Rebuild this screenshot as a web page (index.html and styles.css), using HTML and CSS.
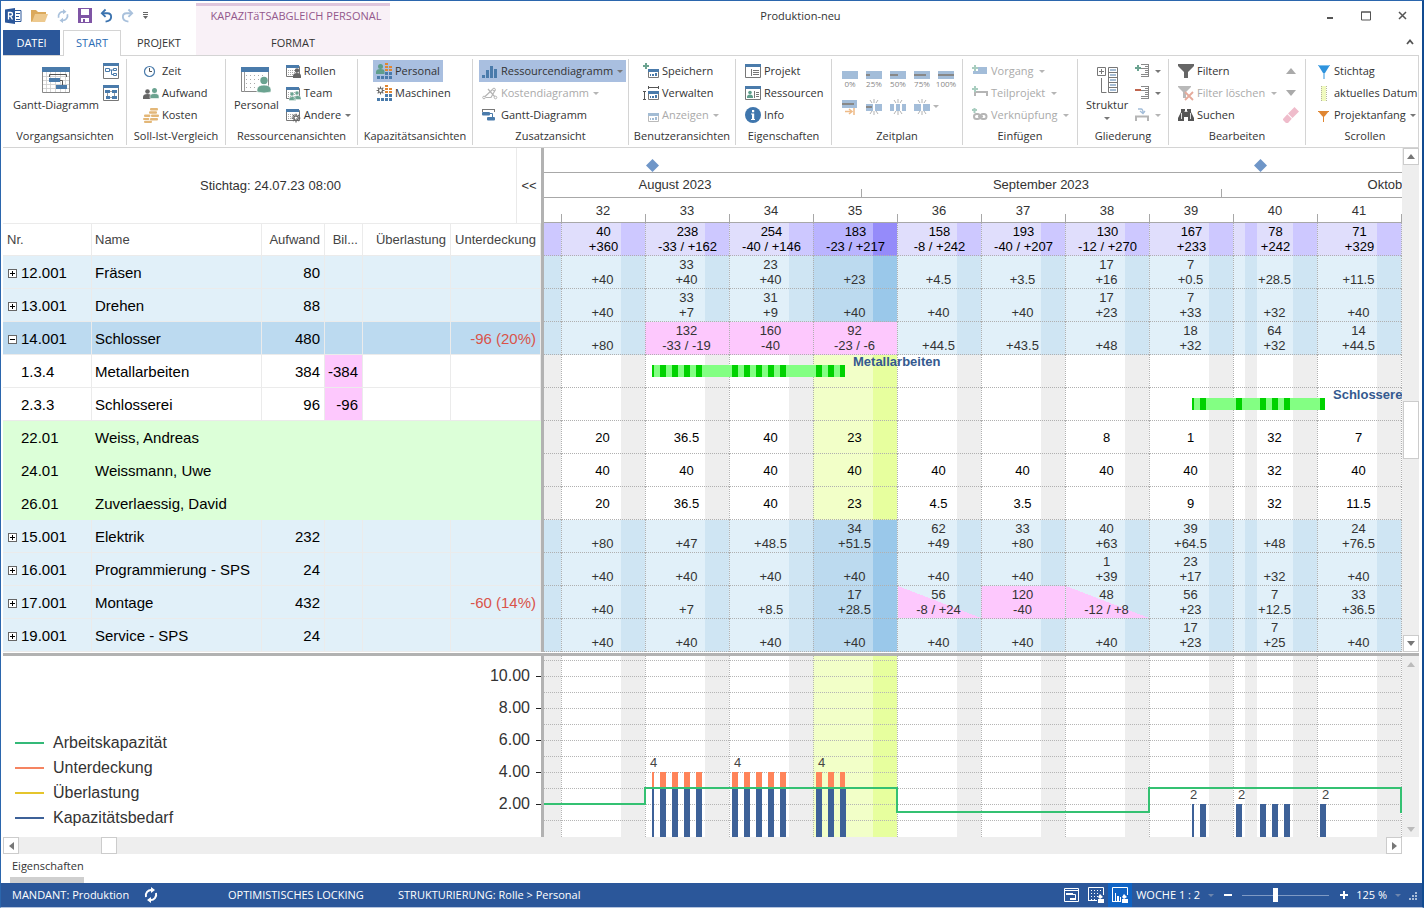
FILE: index.html
```html
<!DOCTYPE html>
<html lang="de">
<head>
<meta charset="utf-8">
<title>Produktion-neu</title>
<meta name="viewport" content="width=device-width, initial-scale=1">
<link rel="stylesheet" href="styles.css">
</head>
<body>
<svg class="defs" aria-hidden="true">
  <defs>
    <symbol id="i-tree" viewBox="0 0 16 16"><path fill="#fff" stroke="#777" d="M.5 2.500h15v13H.5z"/><path fill="#4a7bab" d="M0 0h16v3H0z"/><path fill="none" stroke="#4a7bab" d="M2.500 5.500h4v3h-4zM10.500 5.500h3v2h-3zM10.500 10.500h3v2h-3zM6.500 7h4M8.500 7v4.500h2"/></symbol>
    <symbol id="i-net" viewBox="0 0 16 16"><path fill="#fff" stroke="#777" d="M.5 2.500h15v13H.5z"/><path stroke="#999" fill="none" d="M4.500 8v3M11.500 8v3M7 6.500h2M7 12.500h2"/><path fill="#4a7bab" d="M0 0h16v3H0zM2 5h5v3H2zM9 5h5v3H9zM3 11h4v3H3zM9 11h5v3H9z"/></symbol>
    <symbol id="i-clock" viewBox="0 0 16 16"><circle cx="6.500" cy="8.500" r="5" fill="#fff" stroke="#4a7bab" stroke-width="1.200"/><path d="M6.500 5V8.500H9" fill="none" stroke="#555"/></symbol>
    <symbol id="i-people" viewBox="0 0 16 16"><circle cx="4.500" cy="6.500" r="2.300" fill="#666"/><path fill="#666" d="M0 14V12q0-3 4.500-3T8 12v2z"/><circle cx="11.500" cy="5.500" r="2.500" fill="#6ba390"/><path fill="#6ba390" stroke="#fff" stroke-width=".6" d="M7 13.500v-2q0-3 4.500-3t4.500 3v2z"/></symbol>
    <symbol id="i-coins" viewBox="0 0 16 16"><g fill="#e3b778"><rect x="7" y="1" width="8" height="2.500" rx="1"/><rect x="6" y="4.300" width="8" height="2.500" rx="1"/><rect x="8" y="7.600" width="8" height="2.500" rx="1"/><rect x="7" y="11" width="8" height="2.500" rx="1"/><rect x="1" y="7.600" width="6.400" height="2.500" rx="1"/><rect x="0" y="11" width="6.400" height="2" rx="1"/><rect x="1" y="13.700" width="8" height="2.300" rx="1"/></g></symbol>
    <symbol id="i-cal-base" viewBox="0 0 16 16"><path fill="#fff" stroke="#777" d="M1.500 3.500h13v10h-13z"/><path fill="#4a7bab" d="M1 2h13v3H1z"/><path stroke="#aaa" stroke-dasharray="1 1" d="M3 7.500h9M3 9.500h9M3 11.500h9"/></symbol>
    <symbol id="i-roles" viewBox="0 0 16 16"><use href="#i-cal-base"/><circle cx="12" cy="7.500" r="2.200" fill="#666"/><path fill="#666" d="M8 15v-2q0-3 4-3t4 3v2z"/></symbol>
    <symbol id="i-team" viewBox="0 0 16 16"><use href="#i-cal-base"/><g fill="#6ba390" stroke="#fff" stroke-width=".4"><circle cx="7" cy="9" r="2"/><circle cx="12" cy="8" r="2"/><path d="M9 14.500v-1q0-3 3.500-3t3.500 3v1zM4 15.500v-1q0-3 3.500-3t3.500 3v1z"/></g></symbol>
    <symbol id="i-gear" viewBox="0 0 16 16"><circle cx="8" cy="8" r="3.500" fill="none" stroke="#666" stroke-width="2"/><path stroke="#666" stroke-width="2" d="M8 1v3M8 12v3M1 8h3M12 8h3M3 3l2 2M11 11l2 2M13 3l-2 2M5 11l-2 2"/></symbol>
    <symbol id="i-other" viewBox="0 0 16 16"><use href="#i-cal-base"/><use href="#i-gear" x="6" y="6" width="10" height="10"/></symbol>
    <symbol id="i-load" viewBox="0 0 16 16"><path fill="#e08632" d="M9 0h3v2H9zM9 3h3v2H9zM9 6h3v2H9zM13 3h3v2h-3zM13 6h3v2h-3z"/><path fill="#4a7bab" d="M1 13h3v3H1zM5 13h3v3H5zM9 9h3v3H9zM9 13h3v3H9zM13 9h3v3h-3zM13 13h3v3h-3z"/></symbol>
    <symbol id="i-pers" viewBox="0 0 16 16"><use href="#i-load"/><circle cx="4.500" cy="3.500" r="2.500" fill="#5f9e8b"/><path fill="#5f9e8b" d="M0 11V9q0-3 4.500-3T8.500 9v2z"/></symbol>
    <symbol id="i-mach" viewBox="0 0 16 16"><use href="#i-load"/><use href="#i-gear" x="0" y="1" width="9" height="9"/></symbol>
    <symbol id="i-bars" viewBox="0 0 16 16"><path fill="#4a7bab" d="M0 12h3v3H0zM4 7h3v8H4zM8 3h3v12H8zM12 6h3v9h-3z"/></symbol>
    <symbol id="i-curve" viewBox="0 0 16 16"><path fill="none" stroke="#b5b5b5" stroke-width="1.200" d="M2 12.500l9-8.500M4 12.500h5l4.500-8M6 4l7 8"/><g fill="#fff" stroke="#b5b5b5"><circle cx="2" cy="12.500" r="1.300"/><circle cx="12" cy="4.500" r="1.300"/><circle cx="13.500" cy="12.500" r="1.300"/></g></symbol>
    <symbol id="i-gantt" viewBox="0 0 16 16"><path fill="none" stroke="#777" d="M0 2.500h13M.5 2v3M12.500 2v3"/><rect x="0" y="5" width="8" height="3.500" rx="1" fill="#4a7bab"/><rect x="5" y="10" width="8" height="3.500" rx="1" fill="#4a7bab"/><path fill="none" stroke="#4a7bab" d="M8 6.500h2.500V10"/></symbol>
    <symbol id="i-view" viewBox="0 0 16 16"><path fill="#fff" stroke="#777" d="M5.500 6.500h10v8h-10z"/><path fill="#4a7bab" d="M5 6h11v3H5zM12 10h2v3h-2zM9 11h2v2H9zM7 11h1v2H7z"/></symbol>
    <symbol id="i-save-view" viewBox="0 0 16 16"><use href="#i-view"/><path stroke="#6ba390" stroke-width="2" d="M0 3h6M3 0v6"/></symbol>
    <symbol id="i-edit-view" viewBox="0 0 16 16"><use href="#i-view"/><path fill="none" stroke="#555" d="M5 2.500h11M5.500 1v3M15.500 1v3M1.500 6v9M0 6.500h3M0 14.500h3"/></symbol>
    <symbol id="i-proj" viewBox="0 0 16 16"><path fill="#fff" stroke="#777" d="M.5 2.500h15v12H.5z"/><path fill="#4a7bab" d="M0 1h16v3H0z"/><path stroke="#777" d="M6.500 6v7M8 7.500h6M8 9.500h6M8 11.500h6"/></symbol>
    <symbol id="i-ress" viewBox="0 0 16 16"><path fill="#fff" stroke="#777" d="M.5 2.500h15v12H.5z"/><path fill="#4a7bab" d="M0 1h16v3H0z"/><path stroke="#777" d="M9.500 6v7M11 7.500h3M11 9.500h3M11 11.500h3"/><circle cx="5" cy="7.500" r="1.800" fill="#5f9e8b"/><path fill="#5f9e8b" d="M2 13v-1q0-2.500 3-2.500t3 2.500v1z"/></symbol>
    <symbol id="i-info" viewBox="0 0 16 16"><circle cx="8" cy="8" r="8" fill="#3f76ad"/><path fill="#fff" d="M7 3h2.200v2.200H7zM6 6.500h3.200V12H10v1H6v-1h1V7.500H6z"/></symbol>
    <symbol id="i-burst" viewBox="0 0 16 16"><path stroke="#aaa" stroke-width=".9" d="M4 1l2 3M8 0v4M12 1l-2 3M4 15l2-3M8 16v-4M12 15l-2-3"/></symbol>
    <symbol id="i-task" viewBox="0 0 16 16"><path fill="#a3bdd9" d="M6 4h9v7H6zM1 8h5v3H1z"/><path stroke="#a8cdbf" stroke-width="2" d="M0 5h6M3 2v6"/></symbol>
    <symbol id="i-sub" viewBox="0 0 16 16"><path fill="none" stroke="#b5b5b5" stroke-width="2" d="M3 11V7h12v4"/><path stroke="#a8cdbf" stroke-width="2" d="M0 4h6M3 1v6"/></symbol>
    <symbol id="i-link" viewBox="0 0 16 16"><g fill="none" stroke="#b5b5b5" stroke-width="2"><rect x="2" y="7" width="6" height="5" rx="2.500"/><rect x="8.500" y="7" width="6" height="5" rx="2.500"/><path d="M6 9.500h5"/></g><path stroke="#a8cdbf" stroke-width="2" d="M0 3h5M2.500 1v5"/></symbol>
    <symbol id="i-ind" viewBox="0 0 16 16"><path stroke="#888" fill="none" d="M6 1.500h8M10 3.500h4M6 5.500h8M10 7.500h4M10 9.500h4M6 11.500h8M6 13.500h8M13.500 2v11"/></symbol>
    <symbol id="i-plus" viewBox="0 0 16 16"><use href="#i-ind"/><path stroke="#6ba390" stroke-width="2" d="M0 5h6M3 2v6"/></symbol>
    <symbol id="i-minus" viewBox="0 0 16 16"><use href="#i-ind"/><path stroke="#c0654e" stroke-width="2" d="M0 5h6"/></symbol>
    <symbol id="i-roll" viewBox="0 0 16 16"><path fill="none" stroke="#b5b5b5" stroke-width="2" d="M1 14V9.500h12V14"/><path fill="none" stroke="#a3bdd9" stroke-width="1.300" d="M3 2h3q2 0 2 4M5 4l3 2.500L10 4"/></symbol>
    <symbol id="i-filter" viewBox="0 0 16 16"><path fill="#666" d="M0 1h16v2l-6 6v6H6V9L0 3z"/></symbol>
    <symbol id="i-nofilter" viewBox="0 0 16 16"><path fill="#b9b9b9" d="M0 1h13v1L8 7v6H5V7L0 2z"/><path stroke="#e5aa9b" stroke-width="1.800" d="M7 7l8 8M15 7l-8 8"/></symbol>
    <symbol id="i-search" viewBox="0 0 16 16"><path fill="#555" d="M3 2h4v2h2V2h4v3l3 6v3h-6v-4H6v4H0v-3l3-6z"/><path stroke="#fff" d="M3.500 6v6M12.500 6v6M6.500 4.500h3" fill="none" stroke-width=".8"/></symbol>
    <symbol id="i-eraser" viewBox="0 0 16 16"><path fill="#efbccb" d="M11.500 0L16 4.500 9.500 11 5 6.500zM4.300 7.200l4.500 4.500L5 16H3l-3-3v-1z"/></symbol>
    <symbol id="i-key" viewBox="0 0 16 16"><path fill="#2f93dd" d="M3 2h12l-5 8H8z"/><path stroke="#2f93dd" d="M9 8v8"/><path stroke="#7ec0ee" d="M4 2.500h10"/></symbol>
    <symbol id="i-today" viewBox="0 0 16 16"><path fill="#f0fabf" d="M6 1h5v15H6z"/><path stroke="#b5b5a0" stroke-dasharray="1 1" d="M6.500 1v15M11.500 1v15"/></symbol>
    <symbol id="i-start" viewBox="0 0 16 16"><path fill="#e08632" d="M3 4h11L9.500 9.500h-2z"/><path stroke="#e08632" d="M3 4.500h11M8.500 8v7"/></symbol>
    <symbol id="i-sync" viewBox="0 0 16 16"><g fill="none" stroke="currentColor" stroke-width="2"><path d="M3 10a5.500 5.500 0 0 1 6-7M13 6a5.500 5.500 0 0 1-6 7"/></g><path fill="currentColor" d="M8 0l4 3-4 3zM8 10v6l-4-3z"/></symbol>
    <symbol id="i-undo" viewBox="0 0 14 16"><path fill="none" stroke="currentColor" stroke-width="2" d="M3 5h5q4 0 4 4t-6 5"/><path fill="none" stroke="currentColor" stroke-width="2" d="M6 1L2 5l4 4"/></symbol>
  </defs>
</svg>

<header class="title-bar">
  <div class="quick-access">
    <svg class="q-logo" width="17" height="16" viewBox="0 0 17 16" aria-label="R"><path fill="#fff" stroke="#2b579a" d="M8 2.500h8v11H8z"/><path stroke="#2b579a" d="M11 5.500h4M11 8.500h3M11 11.500h4"/><path fill="#2b579a" d="M0 1.500L10 0v16L0 14.500z"/><path fill="none" stroke="#fff" stroke-width="1.300" d="M3.500 11.500v-7h2q2 0 2 1.800t-2 1.800h-2m2 0l2 3.400"/></svg>
    <button aria-label="Öffnen"><svg width="17" height="16" viewBox="0 0 17 16"><path fill="#dba95c" d="M0 14V2h5l2 2h8v2z"/><path fill="#edc98e" d="M1 14L4 6h13l-3 8z"/></svg></button>
    <button aria-label="Aktualisieren" class="pale"><svg width="14" height="16"><use href="#i-sync"/></svg></button>
    <button aria-label="Speichern"><svg width="14" height="15" viewBox="0 0 14 15"><path fill="#7f55a5" d="M0 0h14v15H0z"/><path fill="#fff" d="M3 1h8v6H3zM3 10h8v4H3z"/><path fill="#7f55a5" d="M5 11h2v3H5z"/></svg></button>
    <button aria-label="Rückgängig" class="blue"><svg width="13" height="16"><use href="#i-undo"/></svg></button>
    <button aria-label="Wiederholen" class="pale"><svg class="flip" width="13" height="16"><use href="#i-undo"/></svg></button>
    <button aria-label="Anpassen"><svg width="7" height="8" viewBox="0 0 7 8"><path fill="#666" d="M1 0h5v1H1zM1 2h5v1H1zM1 4h5L3.500 7z"/></svg></button>
  </div>
  <nav class="tabs">
    <button class="tab file">DATEI</button>
    <button class="tab active">START</button>
    <button class="tab">PROJEKT</button>
  </nav>
  <div class="context">
    <div class="context-title">KAPAZITäTSABGLEICH PERSONAL</div>
    <button class="tab">FORMAT</button>
  </div>
  <h1>Produktion-neu</h1>
  <div class="window-controls">
    <button aria-label="Minimieren"><svg width="10" height="10"><path d="M2 6h6v2H2z" fill="#555"/></svg></button>
    <button aria-label="Maximieren"><svg width="10" height="10"><path d="M.5 1h9v8h-9zM0 1h10" fill="none" stroke="#555"/></svg></button>
    <button aria-label="Schließen"><svg width="10" height="10"><path d="M2 1l7 7M9 1L2 8" stroke="#555" stroke-width="1.500"/></svg></button>
  </div>
  <button class="collapse" aria-label="Menüband reduzieren"><svg width="8" height="6"><path d="M1 5l3-3.500L7 5" fill="none" stroke="#555" stroke-width="1.800"/></svg></button>
</header>

<section class="ribbon">
  <div class="group g1">
    <div class="tools">
      <button class="large"><svg width="28" height="26" viewBox="0 0 28 26"><path fill="#fff" stroke="#888" d="M.5 2.500h27v23H.5z"/><path stroke="#ccc" stroke-width=".8" d="M1 9.500h26M1 13.500h26M1 17.500h26M1 21.500h26M4.500 5v20M8.500 5v20M13.500 5v20M18.500 5v20M23.500 5v20"/><path fill="#4a7bab" d="M0 0h28v5H0zM7 11h11v4H7zM14 18h11v4H14z"/><path fill="none" stroke="#555" d="M7.500 10V7.500h17V10M18 13.500h2.500V18"/></svg><span>Gantt-Diagramm</span></button>
      <button class="btn" aria-label="Strukturplan"><svg><use href="#i-tree"/></svg></button>
      <button class="btn" aria-label="Netzplan"><svg><use href="#i-net"/></svg></button>
    </div>
    <h2>Vorgangsansichten</h2>
  </div>
  <div class="group g2">
    <div class="tools">
      <button class="btn"><svg><use href="#i-clock"/></svg>Zeit</button>
      <button class="btn"><svg><use href="#i-people"/></svg>Aufwand</button>
      <button class="btn"><svg><use href="#i-coins"/></svg>Kosten</button>
    </div>
    <h2>Soll-Ist-Vergleich</h2>
  </div>
  <div class="group g3">
    <div class="tools">
      <button class="large"><svg width="30" height="26" viewBox="0 0 30 26"><path fill="#fff" stroke="#888" d="M.5 2.500h27v22H.5z"/><path stroke="#aaa" stroke-dasharray="1 3" d="M5 8.500h18M5 12.500h13M5 16.500h12M5 20.500h12"/><path stroke="#999" d="M3.500 5v20"/><path fill="#4a7bab" d="M0 0h28v5H0z"/><circle cx="23" cy="13.500" r="3.700" fill="#6ba390"/><path fill="#6ba390" stroke="#fff" stroke-width=".7" d="M16 25v-3q1-4 7-4t7 4v3q-7 2-14 0z"/></svg><span>Personal</span></button>
      <button class="btn"><svg><use href="#i-roles"/></svg>Rollen</button>
      <button class="btn"><svg><use href="#i-team"/></svg>Team</button>
      <button class="btn"><svg><use href="#i-other"/></svg>Andere<i class="caret"></i></button>
    </div>
    <h2>Ressourcenansichten</h2>
  </div>
  <div class="group g4">
    <div class="tools">
      <button class="btn on"><svg><use href="#i-pers"/></svg>Personal</button>
      <button class="btn"><svg><use href="#i-mach"/></svg>Maschinen</button>
    </div>
    <h2>Kapazitätsansichten</h2>
  </div>
  <div class="group g5">
    <div class="tools">
      <button class="btn on"><svg><use href="#i-bars"/></svg>Ressourcendiagramm<i class="caret"></i></button>
      <button class="btn" disabled><svg><use href="#i-curve"/></svg>Kostendiagramm<i class="caret"></i></button>
      <button class="btn"><svg><use href="#i-gantt"/></svg>Gantt-Diagramm</button>
    </div>
    <h2>Zusatzansicht</h2>
  </div>
  <div class="group g6">
    <div class="tools">
      <button class="btn"><svg><use href="#i-save-view"/></svg>Speichern</button>
      <button class="btn"><svg><use href="#i-edit-view"/></svg>Verwalten</button>
      <button class="btn" disabled><svg class="faded"><use href="#i-view"/></svg>Anzeigen<i class="caret"></i></button>
    </div>
    <h2>Benutzeransichten</h2>
  </div>
  <div class="group g7">
    <div class="tools">
      <button class="btn"><svg><use href="#i-proj"/></svg>Projekt</button>
      <button class="btn"><svg><use href="#i-ress"/></svg>Ressourcen</button>
      <button class="btn"><svg><use href="#i-info"/></svg>Info</button>
    </div>
    <h2>Eigenschaften</h2>
  </div>
  <div class="group g8">
    <div class="progress-tools">
      <button disabled><svg width="16" height="8"><path fill="#a3bdd9" d="M0 0h16v8H0z"/></svg>0%</button>
      <button disabled><svg width="16" height="8"><path fill="#a3bdd9" d="M0 0h16v8H0z"/><path fill="#888" d="M0 3h4v2H0z"/></svg>25%</button>
      <button disabled><svg width="16" height="8"><path fill="#a3bdd9" d="M0 0h16v8H0z"/><path fill="#888" d="M0 3h8v2H0z"/></svg>50%</button>
      <button disabled><svg width="16" height="8"><path fill="#a3bdd9" d="M0 0h16v8H0z"/><path fill="#888" d="M0 3h12v2H0z"/></svg>75%</button>
      <button disabled><svg width="16" height="8"><path fill="#a3bdd9" d="M0 0h16v8H0z"/><path fill="#888" d="M0 3h16v2H0z"/></svg>100%</button>
      <button disabled aria-label="Fortschreiben"><svg width="16" height="16"><path fill="#a3bdd9" d="M0 1h15v8H0z"/><path fill="#888" d="M0 4h12v2H0z"/><path fill="none" stroke="#eebb88" stroke-width="1.500" d="M3 12.500h6M7 10l3 2.500L7 15M12 9v7"/></svg></button>
      <button disabled aria-label="Teilen"><svg width="16" height="16"><use href="#i-burst"/><path fill="#a3bdd9" d="M0 5h7v7H0zM9 5h7v7H9z"/><path fill="#888" d="M0 7h6v2H0z"/></svg></button>
      <button disabled aria-label="Mehrfach teilen"><svg width="16" height="16"><use href="#i-burst"/><path fill="#a3bdd9" d="M0 5h4v7H0zM6 5h4v7H6zM12 5h4v7h-4z"/></svg></button>
      <button disabled aria-label="Zusammenführen" class="wide"><svg width="16" height="16"><use href="#i-burst"/><path fill="#a3bdd9" d="M0 5h7v7H0zM9 5h7v7H9z"/></svg><i class="caret"></i></button>
    </div>
    <h2>Zeitplan</h2>
  </div>
  <div class="group g9">
    <div class="tools">
      <button class="btn" disabled><svg><use href="#i-task"/></svg>Vorgang<i class="caret"></i></button>
      <button class="btn" disabled><svg><use href="#i-sub"/></svg>Teilprojekt<i class="caret"></i></button>
      <button class="btn" disabled><svg><use href="#i-link"/></svg>Verknüpfung<i class="caret"></i></button>
    </div>
    <h2>Einfügen</h2>
  </div>
  <div class="group g10">
    <div class="tools">
      <button class="large"><svg width="21" height="26" viewBox="0 0 21 26"><path fill="#fff" stroke="#777" d="M.5.5h8v8h-8zM11.500.5h9v25h-9z"/><path fill="none" stroke="#777" d="M2 4.500h5M4.500 2v5M4.500 11v14.500h5M11 5.500h10M11 10.500h10M11 15.500h10M11 20.500h10"/><path stroke="#4a7bab" d="M13 3h6M13 8h6M13 13h6M13 18h6M13 23h6"/></svg><span>Struktur</span><i class="caret"></i></button>
      <button class="btn" aria-label="Einblenden"><svg><use href="#i-plus"/></svg><i class="caret"></i></button>
      <button class="btn" aria-label="Ausblenden"><svg><use href="#i-minus"/></svg><i class="caret"></i></button>
      <button class="btn" disabled aria-label="Verdichten"><svg><use href="#i-roll"/></svg><i class="caret"></i></button>
    </div>
    <h2>Gliederung</h2>
  </div>
  <div class="group g11">
    <div class="tools">
      <button class="btn"><svg><use href="#i-filter"/></svg>Filtern</button>
      <button class="btn" disabled><svg><use href="#i-nofilter"/></svg>Filter löschen<i class="caret"></i></button>
      <button class="btn"><svg><use href="#i-search"/></svg>Suchen</button>
      <button class="btn" disabled aria-label="Vorheriges"><svg viewBox="0 0 16 16"><path fill="#aaa" d="M3 11l5-6 5 6z"/></svg></button>
      <button class="btn" disabled aria-label="Nächstes"><svg viewBox="0 0 16 16"><path fill="#aaa" d="M3 5l5 6 5-6z"/></svg></button>
      <button class="btn" disabled aria-label="Löschen"><svg><use href="#i-eraser"/></svg></button>
    </div>
    <h2>Bearbeiten</h2>
  </div>
  <div class="group g12">
    <div class="tools">
      <button class="btn"><svg><use href="#i-key"/></svg>Stichtag</button>
      <button class="btn"><svg><use href="#i-today"/></svg>aktuelles Datum</button>
      <button class="btn"><svg><use href="#i-start"/></svg>Projektanfang<i class="caret"></i></button>
    </div>
    <h2>Scrollen</h2>
  </div>
</section>

<main>
  <section class="board">
    <div class="list-pane">
      <div class="list-top"><div class="key-date">Stichtag: 24.07.23 08:00</div><button class="fold">&lt;&lt;</button></div>
      <table class="list">
        <colgroup><col class="c-nr"><col class="c-name"><col class="c-eff"><col class="c-bal"><col class="c-over"><col></colgroup>
        <thead><tr><th>Nr.</th><th>Name</th><th class="r">Aufwand</th><th class="r">Bil...</th><th class="r">Überlastung</th><th class="r">Unterdeckung</th></tr></thead>
        <tbody>
          <tr class="role"><td><button class="exp" aria-label="Aufklappen"></button>12.001</td><td>Fräsen</td><td>80</td><td></td><td></td><td></td></tr>
          <tr class="role"><td><button class="exp" aria-label="Aufklappen"></button>13.001</td><td>Drehen</td><td>88</td><td></td><td></td><td></td></tr>
          <tr class="role sel"><td><button class="exp open" aria-label="Zuklappen"></button>14.001</td><td>Schlosser</td><td>480</td><td></td><td></td><td class="neg">-96 (20%)</td></tr>
          <tr><td>1.3.4</td><td>Metallarbeiten</td><td>384</td><td class="pink">-384</td><td></td><td></td></tr>
          <tr><td>2.3.3</td><td>Schlosserei</td><td>96</td><td class="pink">-96</td><td></td><td></td></tr>
          <tr class="person"><td>22.01</td><td>Weiss, Andreas</td><td></td><td></td><td></td><td></td></tr>
          <tr class="person"><td>24.01</td><td>Weissmann, Uwe</td><td></td><td></td><td></td><td></td></tr>
          <tr class="person"><td>26.01</td><td>Zuverlaessig, David</td><td></td><td></td><td></td><td></td></tr>
          <tr class="role"><td><button class="exp" aria-label="Aufklappen"></button>15.001</td><td>Elektrik</td><td>232</td><td></td><td></td><td></td></tr>
          <tr class="role"><td><button class="exp" aria-label="Aufklappen"></button>16.001</td><td>Programmierung - SPS</td><td>24</td><td></td><td></td><td></td></tr>
          <tr class="role"><td><button class="exp" aria-label="Aufklappen"></button>17.001</td><td>Montage</td><td>432</td><td></td><td></td><td class="neg">-60 (14%)</td></tr>
          <tr class="role"><td><button class="exp" aria-label="Aufklappen"></button>19.001</td><td>Service - SPS</td><td>24</td><td></td><td></td><td></td></tr>
        </tbody>
      </table>
    </div>
    <div class="time-pane">
      <div class="milestones">
        <svg class="m1" width="13" height="13"><path fill="#6f96c8" d="M6.500 0L13 6.500 6.500 13 0 6.500z"/></svg>
        <svg class="m2" width="13" height="13"><path fill="#6f96c8" d="M6.500 0L13 6.500 6.500 13 0 6.500z"/></svg>
      </div>
      <div class="months"><span class="m31">August 2023</span><span class="m30">September 2023</span><span class="m31">Oktober 2023</span></div>
      <table class="weeks">
        <colgroup><col class="w-stub"><col span="10" class="w-week"><col></colgroup>
        <thead><tr><th></th><th>32</th><th>33</th><th>34</th><th>35</th><th>36</th><th>37</th><th>38</th><th>39</th><th>40</th><th>41</th><th></th></tr></thead>
        <tbody>
          <tr class="sum"><td></td><td>40<br>+360</td><td>238<br>-33 / +162</td><td>254<br>-40 / +146</td><td>183<br>-23 / +217</td><td>158<br>-8 / +242</td><td>193<br>-40 / +207</td><td>130<br>-12 / +270</td><td>167<br>+233</td><td>78<br>+242</td><td>71<br>+329</td><td></td></tr>
          <tr class="role"><td></td><td>+40</td><td>33<br>+40</td><td>23<br>+40</td><td>+23</td><td>+4.5</td><td>+3.5</td><td>17<br>+16</td><td>7<br>+0.5</td><td>+28.5</td><td>+11.5</td><td></td></tr>
          <tr class="role"><td></td><td>+40</td><td>33<br>+7</td><td>31<br>+9</td><td>+40</td><td>+40</td><td>+40</td><td>17<br>+23</td><td>7<br>+33</td><td>+32</td><td>+40</td><td></td></tr>
          <tr class="role"><td></td><td>+80</td><td class="over">132<br>-33 / -19</td><td class="over">160<br>-40</td><td class="over">92<br>-23 / -6</td><td>+44.5</td><td>+43.5</td><td>+48</td><td>18<br>+32</td><td>64<br>+32</td><td>14<br>+44.5</td><td></td></tr>
          <tr><td></td><td></td><td><div class="bar"><svg width="193" height="12"><path fill="#83ff83" d="M0 0h193v12H0z"/><path fill="#00d200" d="M0 0h2v12H0zM8 0h6v12H8zM20 0h6v12h-6zM32 0h6v12h-6zM44 0h6v12h-6zM80 0h6v12h-6zM92 0h6v12h-6zM104 0h6v12h-6zM116 0h6v12h-6zM128 0h6v12h-6zM164 0h6v12h-6zM176 0h6v12h-6zM188 0h5v12h-5z"/></svg><span>Metallarbeiten</span></div></td><td></td><td></td><td></td><td></td><td></td><td></td><td></td><td></td><td></td></tr>
          <tr><td></td><td></td><td></td><td></td><td></td><td></td><td></td><td></td><td><div class="bar late"><svg width="133" height="12"><path fill="#83ff83" d="M0 0h133v12H0z"/><path fill="#00d200" d="M0 0h2v12H0zM8 0h6v12H8zM44 0h6v12h-6zM68 0h6v12h-6zM80 0h6v12h-6zM92 0h6v12h-6zM128 0h5v12h-5z"/></svg><span>Schlosserei</span></div></td><td></td><td></td><td></td></tr>
          <tr class="person"><td></td><td>20</td><td>36.5</td><td>40</td><td>23</td><td></td><td></td><td>8</td><td>1</td><td>32</td><td>7</td><td></td></tr>
          <tr class="person"><td></td><td>40</td><td>40</td><td>40</td><td>40</td><td>40</td><td>40</td><td>40</td><td>40</td><td>32</td><td>40</td><td></td></tr>
          <tr class="person"><td></td><td>20</td><td>36.5</td><td>40</td><td>23</td><td>4.5</td><td>3.5</td><td></td><td>9</td><td>32</td><td>11.5</td><td></td></tr>
          <tr class="role"><td></td><td>+80</td><td>+47</td><td>+48.5</td><td>34<br>+51.5</td><td>62<br>+49</td><td>33<br>+80</td><td>40<br>+63</td><td>39<br>+64.5</td><td>+48</td><td>24<br>+76.5</td><td></td></tr>
          <tr class="role"><td></td><td>+40</td><td>+40</td><td>+40</td><td>+40</td><td>+40</td><td>+40</td><td>1<br>+39</td><td>23<br>+17</td><td>+32</td><td>+40</td><td></td></tr>
          <tr class="role"><td></td><td>+40</td><td>+7</td><td>+8.5</td><td>17<br>+28.5</td><td class="part">56<br>-8 / +24</td><td class="over">120<br>-40</td><td class="part">48<br>-12 / +8</td><td>56<br>+23</td><td>7<br>+12.5</td><td>33<br>+36.5</td><td></td></tr>
          <tr class="role"><td></td><td>+40</td><td>+40</td><td>+40</td><td>+40</td><td>+40</td><td>+40</td><td>+40</td><td>17<br>+23</td><td>7<br>+25</td><td>+40</td><td></td></tr>
        </tbody>
      </table>
    </div>
    <div class="vscroll"><button class="arrow" aria-label="Nach oben"><i class="tri up"></i></button><div class="thumb"></div><button class="arrow" aria-label="Nach unten"><i class="tri down"></i></button></div>
  </section>

  <section class="board lower">
    <div class="list-pane legend-pane">
      <ul class="legend">
        <li class="cap">Arbeitskapazität</li>
        <li class="under">Unterdeckung</li>
        <li class="load">Überlastung</li>
        <li class="need">Kapazitätsbedarf</li>
      </ul>
      <ol class="axis"><li>10.00</li><li>8.00</li><li>6.00</li><li>4.00</li><li>2.00</li></ol>
    </div>
    <div class="time-pane">
      <svg class="chart" width="100%" height="181">
        <defs>
          <pattern id="wk" x="17" y="0" width="84" height="181" patternUnits="userSpaceOnUse"><path fill="#fff" d="M0 0h84v181H0z"/><path fill="#eee" d="M60 0h24v181H60z"/></pattern>
        </defs>
        <rect width="100%" height="181" fill="url(#wk)"/>
        <path fill="#eee" d="M701 0h12v181h-12z"/>
        <path fill="#f2ffc8" d="M269 0h60v181h-60z"/><path fill="#e7ff9e" d="M329 0h24v181h-24z"/>
        <g stroke="#b5b5b5" stroke-dasharray="1 1">
          <path d="M0 4.500h2000M0 20.500h2000M0 36.500h2000M0 52.500h2000M0 68.500h2000M0 84.500h2000M0 100.500h2000M0 116.500h2000M0 132.500h2000M0 148.500h2000M0 164.500h2000"/>
          <path d="M17.500 0v181M101.500 0v181M185.500 0v181M269.500 0v181M353.500 0v181M437.500 0v181M521.500 0v181M605.500 0v181M689.500 0v181M773.500 0v181M857.500 0v181"/>
        </g>
        <path fill="#ff845a" d="M108 116h2v16h-2zM116 116h6v16h-6zM128 116h6v16h-6zM140 116h6v16h-6zM152 116h6v16h-6zM188 116h6v16h-6zM200 116h6v16h-6zM212 116h6v16h-6zM224 116h6v16h-6zM236 116h6v16h-6zM272 116h6v16h-6zM284 116h6v16h-6zM296 116h5v16h-5z"/>
        <path fill="#3d6198" d="M108 132h2v49h-2zM116 132h6v49h-6zM128 132h6v49h-6zM140 132h6v49h-6zM152 132h6v49h-6zM188 132h6v49h-6zM200 132h6v49h-6zM212 132h6v49h-6zM224 132h6v49h-6zM236 132h6v49h-6zM272 132h6v49h-6zM284 132h6v49h-6zM296 132h6v49h-6zM648 148h2v33h-2zM656 148h6v33h-6zM692 148h6v33h-6zM716 148h6v33h-6zM728 148h6v33h-6zM740 148h6v33h-6zM776 148h6v33h-6z"/>
        <path fill="none" stroke="#34c172" stroke-width="2" d="M0 148H101V132H353V156H605V132H857V156H2000"/>
        <g fill="#444"><text x="106" y="111">4</text><text x="190" y="111">4</text><text x="274" y="111">4</text><text x="646" y="143">2</text><text x="694" y="143">2</text><text x="778" y="143">2</text></g>
      </svg>
    </div>
    <div class="vscroll idle"><i class="tri up"></i><i class="tri down"></i></div>
  </section>
  <div class="hscroll"><button class="arrow" aria-label="Nach links"><i class="tri left"></i></button><div class="thumb"></div><button class="arrow" aria-label="Nach rechts"><i class="tri right"></i></button></div>
  <div class="dock"><button>Eigenschaften</button></div>
</main>

<footer>
  <span class="client">MANDANT: Produktion</span>
  <button class="reload" aria-label="Neu laden"><svg width="16" height="16"><use href="#i-sync"/></svg></button>
  <span class="lock">OPTIMISTISCHES LOCKING</span>
  <span class="struct">STRUKTURIERUNG: Rolle &gt; Personal</span>
  <div class="views">
    <button aria-label="Gantt"><svg width="16" height="16"><path fill="none" stroke="#fff" d="M.5 1.500h14v13H.5zM0 3.500h15"/><path stroke="#fff" stroke-width="2" d="M2 7h7M6 12h6"/><path fill="none" stroke="#fff" d="M9 7.500h2.500V11"/></svg></button>
    <button aria-label="Auslastung"><svg width="16" height="16"><path fill="none" stroke="#fff" d="M.5 14V.5h15V8"/><path fill="none" stroke="#fff" stroke-dasharray="1 2" d="M3 3.500h11M3 6.500h9M3 9.500h7M3 12.500h6"/><path fill="#fff" d="M12 7l3 3-3 2-2-2zM10 12h6v4h-6zM0 13h9v1H0z"/></svg></button>
    <button class="active" aria-label="Kapazität"><svg width="16" height="16"><path fill="none" stroke="#fff" d="M.5 14V.5h15V8M0 14.500h9"/><path fill="#fff" d="M3 6h1v8H3zM5 9h2v5H5zM8 10h1v4H8zM12 7l3 3-3 2-2-2zM10 12h6v4h-6z"/></svg></button>
  </div>
  <button class="scale">WOCHE 1 : 2<i class="caret"></i></button>
  <button class="step" aria-label="Verkleinern"><svg width="8" height="8"><path fill="#fff" d="M0 3h8v2H0z"/></svg></button>
  <input class="zoom" type="range" min="0" max="100" value="38" aria-label="Zoom">
  <button class="step" aria-label="Vergrößern"><svg width="8" height="8"><path fill="#fff" d="M0 3h8v2H0zM3 0h2v8H3z"/></svg></button>
  <button class="percent">125 %<i class="caret"></i></button>
  <svg class="grip" width="9" height="9"><path fill="#a9bcd8" d="M6 0h2v2H6zM3 3h2v2H3zM6 3h2v2H6zM0 6h2v2H0zM3 6h2v2H3zM6 6h2v2H6z"/></svg>
</footer>
</body>
</html>
```
FILE: styles.css
```css
* { box-sizing: border-box; }

body {
  margin: 0;
  min-height: 100vh;
  display: flex;
  flex-direction: column;
  overflow: hidden;
  border: 1px solid #2b66ad;
  border-right: 2px solid #114b91;
  border-bottom-color: #b5c4de;
  background: #fff;
  color: #333;
  font: 11px/16px "Open Sans", "Noto Sans", sans-serif;
}

.defs { position: absolute; width: 0; height: 0; }

button {
  margin: 0;
  padding: 0;
  border: 0;
  background: none;
  color: inherit;
  font: inherit;
  white-space: nowrap;
}

svg { display: block; flex: none; }
h1, h2 { margin: 0; font: inherit; }
ul, ol { margin: 0; padding: 0; list-style: none; }

/* Title bar and tabs */
.title-bar {
  display: grid;
  grid-template-columns: 193px 194px 1fr 208px;
  grid-template-rows: 29px 25px;
  padding: 0 3px 0 2px;
}

.quick-access { display: flex; align-items: center; gap: 8px; padding-left: 2px; }
.q-logo { margin-right: 1px; }
.pale { color: #a9c1dc; }
.blue { color: #3b73af; }
.flip { transform: scaleX(-1); }

.tabs { grid-row: 2; grid-column: 1; display: flex; gap: 3px; }
.tab { padding: 0 16px; }
.tab.file { width: 57px; padding: 0; background: #2b579a; color: #fff; }
.tab.active {
  width: 58px;
  height: 26px;
  padding: 0 0 2px;
  position: relative;
  border: 1px solid #d4d4d4;
  border-bottom: 0;
  background: #fff;
  color: #2b6cb5;
}
.tabs .tab:last-child { padding: 0 13px; }

.context {
  grid-row: 1 / 3;
  grid-column: 2;
  margin-top: 2px;
  border-top: 3px solid #dfc6dc;
  background: #f9f1f7;
  display: grid;
  grid-template-rows: 1fr 25px;
  text-align: center;
}
.context-title { padding: 2px 0 0 6px; color: #93588c; white-space: nowrap; }

h1 { grid-column: 3; grid-row: 1; align-self: center; text-align: center; }
.window-controls { grid-column: 4; display: flex; justify-content: flex-end; align-items: center; gap: 26px; padding-right: 12px; }
.collapse { grid-column: 4; grid-row: 2; justify-self: end; padding: 0 5px 2px 0; }

/* Ribbon */
.ribbon {
  display: grid;
  grid-template-columns: 124px 99px 132px 115px 156px 107px 96px 131px 115px 91px 137px 1fr;
  margin: 0 3px 0 2px;
  border: 1px solid #d4d4d4;
  border-left: 0;
  padding: 3px 0 2px;
}
.group { border-right: 1px solid #d4d4d4; height: 86px; min-width: 0; padding-top: 1px; }
.group:last-child { border-right: 0; }
.group h2 { text-align: center; line-height: 20px; white-space: nowrap; }
.tools { display: grid; grid-template-rows: repeat(3, 22px); grid-auto-flow: column; justify-content: start; justify-items: start; }
.btn { display: flex; align-items: center; gap: 3px; height: 22px; padding: 0 3px; }
.btn svg { width: 16px; height: 16px; }
.on { background: #a9bfe0; }
:disabled { color: #aaa; }
.faded { opacity: .5; }
.large { grid-row: span 3; display: flex; flex-direction: column; align-items: center; padding-top: 7px; }
.large span { line-height: 24px; }
.caret { width: 0; border: 3px solid transparent; border-top-color: #777; border-bottom: 0; margin-left: 1px; }
.large .caret { margin: 0; }
:disabled .caret { border-top-color: #b5b5b5; }

.g1 .tools { padding-left: 10px; column-gap: 1px; }
.g1 h2 { padding-left: 1px; }
.g2 .tools { padding-left: 13px; }
.g3 .tools { padding-left: 8px; column-gap: 3px; }
.g4 .tools { padding-left: 15px; }
.g5 .tools { padding-left: 6px; }
.g6 .tools { padding-left: 11px; }
.g7 .tools { padding-left: 6px; }
.g9 .tools { padding-left: 6px; }
.g9 .caret, .g11 .caret { margin-left: 3px; }
.g10 .tools { padding-left: 8px; column-gap: 4px; }
.g11 .tools { padding: 0 5px 0 6px; justify-content: space-between; }
.g12 .tools { padding-left: 6px; }
.g12 h2 { padding-left: 6px; }

.progress-tools { display: grid; grid-template-columns: repeat(5, 24px); grid-template-rows: 28px 27px; padding: 11px 0 0 6px; }
.progress-tools button { display: flex; flex-direction: column; align-items: center; justify-content: start; color: #888; font: 8px/9px "Open Sans", sans-serif; }
.progress-tools .wide { grid-column: span 2; flex-direction: row; align-items: start; padding-left: 4px; }
.wide .caret { margin: 6px 0 0 3px; }

/* Planning board */
main { flex: 1; display: flex; flex-direction: column; padding: 0 3px 0 2px; font-family: "Liberation Sans", Arial, sans-serif; }
.board { display: flex; border-bottom: 1px solid #fff; }
.list-pane { flex: none; width: 541px; border-right: 3px solid #b2b2b2; }
.time-pane { flex: 1; min-width: 0; overflow: hidden; }
.list-top { display: flex; height: 75px; font-size: 13px; line-height: 75px; }
.key-date { width: 514px; padding-left: 22px; text-align: center; border-right: 1px solid #eaeaea; }
.fold { flex: 1; }

table { border-collapse: separate; border-spacing: 0; table-layout: fixed; width: 100%; }
.list { color: #000; font-size: 15px; }
.c-nr { width: 89px; }
.c-name { width: 170px; }
.c-eff { width: 63px; }
.c-bal { width: 38px; }
.c-over { width: 88px; }
.list th, .list td { height: 33px; padding: 0 4px 0 3px; text-align: left; white-space: nowrap; border-right: 1px solid #ebebeb; border-bottom: 1px solid #ebebeb; }
.list td { padding-top: 2px; }
.list th { font-size: 13px; font-weight: normal; color: #444; border-top: 1px solid #ebebeb; }
.list .r, .list td:nth-child(n+3) { text-align: right; }
.list th:first-child { padding-left: 4px; }
.list td:first-child { padding-left: 18px; }
.list .role td:first-child { padding-left: 5px; }
.list .role td { background: #e1f0f9; }
.list .sel td { background: #bcdaf0; }
.list .person td { background: #dcffd8; border-color: #dcffd8; }
.list .pink { background: #fdc8fd; }
.list .neg { color: #d9534a; }
.exp {
  display: inline-block;
  width: 9px;
  height: 9px;
  margin-right: 4px;
  vertical-align: 1px;
  border: 1px solid #666;
  background:
    linear-gradient(#000, #000) center / 5px 1px no-repeat,
    linear-gradient(#000, #000) center / 1px 5px no-repeat,
    #fff;
}
.exp.open { background: linear-gradient(#000, #000) center / 5px 1px no-repeat, #fff; }

.milestones { position: relative; height: 25px; border-bottom: 1px solid #a8a8a8; }
.milestones svg { position: absolute; top: 11px; }
.m1 { left: 102px; }
.m2 { left: 710px; }
.months { display: flex; height: 25px; margin-left: -55px; border-bottom: 1px solid #a8a8a8; font-size: 13px; line-height: 24px; text-align: center; }
.months span { flex: none; background: linear-gradient(#a8a8a8, #a8a8a8) left bottom / 1px 8px no-repeat; }
.m31 { width: 372px; }
.m30 { width: 360px; }

.weeks { font-size: 13px; line-height: 15px; }
.w-stub { width: 17px; }
.w-week { width: 84px; }
.weeks th { height: 25px; padding: 0; font-weight: normal; border-bottom: 1px solid #a8a8a8; background: linear-gradient(#a8a8a8, #a8a8a8) left bottom / 1px 8px no-repeat; }
.weeks th:first-child { background: none; }
.weeks tr { --day: #fff; --off: #eee; --now: #f2ffc8; --now-off: #e7ff9e; }
.weeks .sum { --day: #e0defc; --off: #cdc8ff; --now: #bab4ff; --now-off: #958bfa; color: #000; }
.weeks .role { --day: #e1f0f9; --off: #cfe5f3; --now: #bcdaef; --now-off: #9ac8ea; }
.weeks td {
  position: relative;
  height: 33px;
  padding: 0 2px 1px 0;
  text-align: center;
  vertical-align: bottom;
  white-space: nowrap;
  border-left: 1px dotted #b0b0b0;
  border-bottom: 1px dotted #b0b0b0;
  background: linear-gradient(to right, var(--day) 60px, var(--off) 60px) border-box;
}
.weeks .sum td { padding-right: 0; }
.weeks .person td { vertical-align: middle; padding-bottom: 0; color: #000; }
.weeks td:first-child { border-left: 0; background: var(--off); }
.weeks td:nth-child(5) { background: linear-gradient(to right, var(--now) 60px, var(--now-off) 60px) border-box; }
.weeks td:nth-child(10) { background: linear-gradient(to right, var(--day) 12px, var(--off) 12px 24px, var(--day) 24px 60px, var(--off) 60px) border-box; }
.weeks td.over { background: #fdc8fd; }
.weeks td.part { background: linear-gradient(to top right, #fdc8fd 50%, transparent 50%), linear-gradient(to right, var(--day) 60px, var(--off) 60px) border-box; }

.bar { position: absolute; z-index: 1; left: 6px; top: 10px; display: flex; gap: 8px; color: #34598f; font-weight: bold; }
.bar span { line-height: 12px; margin-top: -9px; }
.bar.late { left: 42px; }

/* Scrollbars */
.vscroll { flex: none; width: 17px; display: flex; flex-direction: column; align-items: center; padding-left: 1px; background: #eee; }
.arrow { flex: none; display: grid; place-items: center; width: 16px; height: 17px; border: 1px solid #ccc; background: #fff; }
.vscroll .thumb { width: 16px; height: 58px; margin: 236px 0 auto; border: 1px solid #ccc; background: #fff; }
.idle { justify-content: space-between; padding-top: 6px; padding-bottom: 5px; }
.tri { width: 0; height: 0; border: 4px solid transparent; }
.up { border-top: 0; border-bottom: 5px solid #777; }
.down { border-bottom: 0; border-top: 5px solid #777; }
.left { border-left: 0; border-right: 5px solid #777; }
.right { border-right: 0; border-left: 5px solid #777; }
.idle .up { border-bottom-color: #bbb; }
.idle .down { border-top-color: #bbb; }
.hscroll { display: flex; margin-right: 17px; height: 17px; background: #eee; }
.hscroll .thumb { width: 16px; margin: 0 auto 0 82px; border: 1px solid #ccc; background: #fff; }

/* Histogram */
.lower { border-top: 3px solid #b2b2b2; border-bottom: 0; }
.legend-pane { display: flex; justify-content: space-between; align-items: end; font-size: 16px; }
.legend { padding: 0 0 7px 12px; line-height: 25px; }
.legend li { display: flex; align-items: center; gap: 9px; }
.legend li::before { content: ""; width: 29px; height: 2px; background: currentColor; }
.legend .cap::before { background: #34b978; }
.legend .under::before { background: #f58461; }
.legend .load::before { background: #e5c52c; }
.legend .need::before { background: #3d6198; }
.axis { align-self: start; padding-top: 4px; line-height: 32px; text-align: right; }
.axis li { padding-right: 11px; background: linear-gradient(#222, #222) right center / 5px 1px no-repeat; }
.chart { font-size: 13px; }

.dock { padding: 4px 0 0 7px; font-family: "Open Sans", sans-serif; }
.dock button { display: block; padding: 0 0 3px 2px; border-bottom: 6px solid #cfcfcf; }

/* Status bar */
footer { display: flex; align-items: center; height: 24px; padding: 0 4px 0 11px; background: #2b579a; color: #fff; white-space: nowrap; }
.client { width: 131px; }
.reload { width: 85px; }
.lock { width: 170px; }
.views { display: flex; margin-left: auto; }
.views button { display: grid; place-items: center; width: 24px; height: 24px; }
.views .active { background: #0f63c4; }
footer .caret { display: inline-block; margin: 0 0 2px 8px; border-top-color: #6e86ad; }
.scale { width: 88px; padding-left: 4px; text-align: left; }
.step { width: 16px; height: 16px; display: grid; place-items: center; }
.zoom { appearance: none; width: 87px; height: 16px; margin: 0 7px 0 6px; background: linear-gradient(#7f9ac4, #7f9ac4) center / 100% 1px no-repeat; }
.zoom::-webkit-slider-thumb { appearance: none; width: 5px; height: 14px; background: #fff; border: 0; }
.percent { margin-left: 4px; }
.grip { margin: 3px 0 0 8px; }
```
